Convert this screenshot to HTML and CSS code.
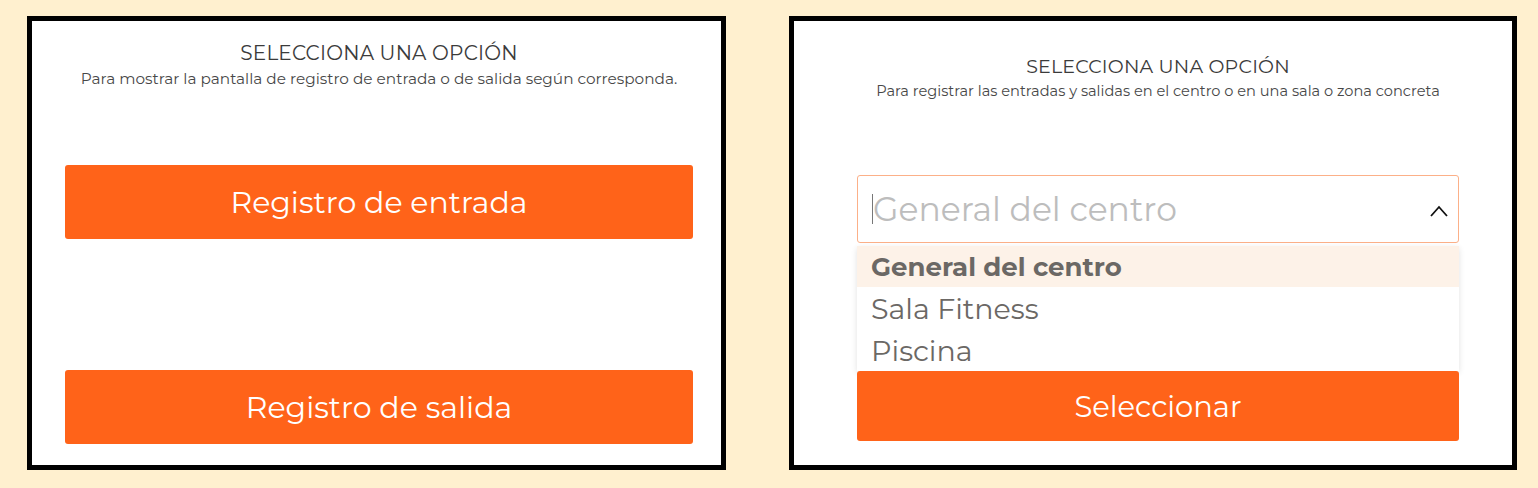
FILE: index.html
```html
<!DOCTYPE html>
<html lang="es">
<head>
    <meta charset="UTF-8">
    <meta name="viewport" content="width=device-width, initial-scale=1.0">
    <title>Registro de accesos</title>
    <link rel="stylesheet" href="styles.css">
</head>
<body>
    <div class="panel panel-left">
        <h2 class="title">SELECCIONA UNA OPCIÓN</h2>
        <p class="subtitle">Para mostrar la pantalla de registro de entrada o de salida según corresponda.</p>

        <button class="btn btn-first">Registro de entrada</button>
        <button class="btn btn-second">Registro de salida</button>
    </div>

    <div class="panel panel-right">
        <h2 class="title title-small">SELECCIONA UNA OPCIÓN</h2>
        <p class="subtitle subtitle-small">Para registrar las entradas y salidas en el centro o en una sala o zona concreta</p>

        <div class="select-wrap">
            <div class="select">
                <span class="cursor"></span>
                <span class="placeholder">General del centro</span>
                <svg class="caret" width="20" height="12" viewBox="0 0 20 12">
                    <path d="M2 11 L10 2 L18 11" fill="none" stroke="#111" stroke-width="1.8"/>
                </svg>
            </div>
            <ul class="options">
                <li class="option active">General del centro</li>
                <li class="option">Sala Fitness</li>
                <li class="option">Piscina</li>
            </ul>
        </div>

        <button class="btn btn-select">Seleccionar</button>
    </div>
</body>
</html>
```

FILE: styles.css
```css
* {
    box-sizing: border-box;
}
body {
    margin: 0;
    padding: 16px 21px 18px 27px;
    display: flex;
    gap: 63px;
    background-color: #fff0cf;
    font-family: "Montserrat", "Inter", "DejaVu Sans", sans-serif;
}
.panel {
    height: 454px;
    background-color: #fff;
    border: 5px solid #000;
    display: flex;
    flex-direction: column;
    align-items: center;
}
.panel-left {
    width: 699px;
    padding: 0 28px 0 33px;
}
.panel-right {
    width: 728px;
    padding: 0 53px 0 63px;
}
.title {
    margin: 20px 0 0;
    font-size: 20px;
    line-height: 25px;
    font-weight: 400;
    color: #3b3b3b;
    letter-spacing: 0.2px;
}
.subtitle {
    margin: 3px 0 0;
    font-size: 15.3px;
    line-height: 19px;
    color: #484848;
}
.title-small {
    margin-top: 33px;
    font-size: 19px;
}
.subtitle-small {
    margin-top: 3px;
    font-size: 14.6px;
}
.btn {
    width: 100%;
    height: 74px;
    border: none;
    border-radius: 3px;
    background-color: #ff6319;
    color: #fff;
    font-family: inherit;
    font-size: 30px;
    cursor: pointer;
}
.btn-first {
    margin-top: 77px;
}
.btn-second {
    margin-top: 131px;
}
.select-wrap {
    position: relative;
    width: 100%;
    margin-top: 74px;
}
.select {
    height: 68px;
    border: 1px solid #fcb088;
    border-radius: 3px;
    display: flex;
    align-items: center;
    padding: 0 9px 0 14px;
}
.cursor {
    width: 1px;
    height: 30px;
    background-color: #777;
}
.placeholder {
    flex: 1;
    font-size: 33px;
    color: #bdbdbd;
}
.caret {
    margin-top: 4px;
}
.options {
    position: absolute;
    top: 71px;
    left: 0;
    right: 0;
    margin: 0;
    padding: 0;
    list-style: none;
    background-color: #fff;
    box-shadow: 0 2px 6px rgba(0, 0, 0, 0.12);
}
.option {
    height: 42px;
    padding: 0 14px;
    display: flex;
    align-items: center;
    font-size: 28.5px;
    color: #6b6865;
}
.option.active {
    height: 41px;
    background-color: #fdf2e8;
    font-size: 26px;
    font-weight: 700;
}
.btn-select {
    position: relative;
    z-index: 1;
    height: 70px;
    margin-top: 128px;
    font-size: 29px;
}
```
